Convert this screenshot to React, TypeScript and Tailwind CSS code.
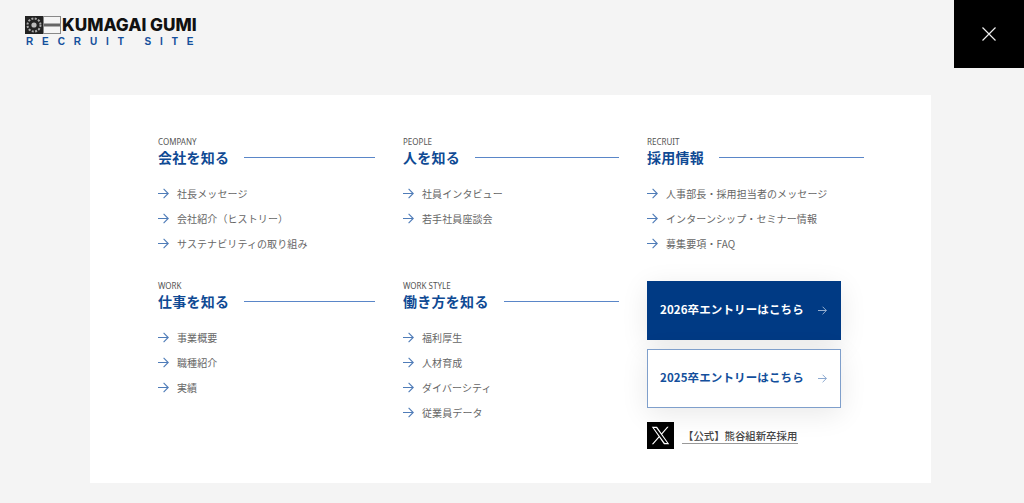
// App.tsx — recruit site menu overlay
const SANS = 'font-["Noto_Sans_CJK_JP","Noto_Sans",sans-serif]';

function Arrow({ className = 'w-[11px] h-[11px]' }: { className?: string }) {
  return (
    <svg viewBox="0 0 11 11" className={className} fill="none" stroke="currentColor" strokeWidth="1.1">
      <path d="M0 5.5H10.2M5.6 .9L10.2 5.5L5.6 10.1" />
    </svg>
  );
}

function Section({ en, title, links }: { en: string; title: string; links: string[] }) {
  return (
    <div>
      <p className="text-[8px] leading-[10px] text-[#555] h-[10px] font-['Noto_Sans',sans-serif]">{en}</p>
      <div className="flex items-center gap-[15px] h-[20px]">
        <h2 className="text-[14px] leading-[20px] font-bold text-[#0f4a94] tracking-[0.02em] whitespace-nowrap">{title}</h2>
        <div className="flex-1 h-px bg-[#5a86c8]" />
      </div>
      <ul className="mt-[14px] flex flex-col">
        {links.map((t) => (
          <li key={t} className="flex items-center h-[25px] text-[#4f7cb8]">
            <Arrow />
            <span className="ml-[8px] text-[10px] text-[#666] tracking-[0.1px] whitespace-nowrap">{t}</span>
          </li>
        ))}
      </ul>
    </div>
  );
}

function Entry({ label, solid }: { label: string; solid?: boolean }) {
  return (
    <a
      className={`flex items-center justify-between h-[59px] pl-[12px] pr-[13px] pb-[1px] border shadow-[0_6px_28px_rgba(0,0,0,0.09)] ${
        solid ? 'bg-[#003a84] border-[#003a84] text-white' : 'bg-white border-[#7f9fcb] text-[#134f9c]'
      }`}
    >
      <span className="text-[11.5px] font-bold tracking-[0.01em] whitespace-nowrap">{label}</span>
      <Arrow className={`w-[9px] h-[9px] ${solid ? 'text-[#a8bcd8]' : 'text-[#7f9fcb]'}`} />
    </a>
  );
}

function Logo() {
  return (
    <div className="w-[172px]">
      <div className="flex items-center h-[18px]">
        <svg viewBox="0 0 36 18" className="w-[36px] h-[18px] shrink-0">
          <rect width="18" height="18" fill="#222" />
          <circle cx="9" cy="9" r="6.5" fill="none" stroke="#aaa" strokeWidth="2" strokeDasharray="2 1.4" />
          <circle cx="9" cy="9" r="2.6" fill="#bbb" />
          <rect x="18.5" y=".5" width="17" height="17" fill="#f4f4f4" stroke="#888" />
          <rect x="19" y="7.5" width="16" height="3" fill="#666" />
        </svg>
        <span className="ml-[1px] font-['Inter',sans-serif] font-extrabold text-[17.2px] leading-[18px] text-[#111] whitespace-nowrap">
          KUMAGAI GUMI
        </span>
      </div>
      <p className="mt-[3px] pl-px font-['Liberation_Sans',sans-serif] font-bold text-[10px] leading-[10px] text-[#134f9c] tracking-[0.89em] whitespace-nowrap">
        RECRUIT SITE
      </p>
    </div>
  );
}

export default function App() {
  return (
    <div className={`h-[503px] w-[1024px] overflow-hidden bg-[#f4f4f4] ${SANS}`}>
      <header className="flex justify-between h-[95px]">
        <div className="pl-[25px] pt-[16px]">
          <Logo />
        </div>
        <button className="w-[70px] h-[68px] bg-black flex items-center justify-center text-[#eee]">
          <svg viewBox="0 0 14 14" className="w-[14px] h-[14px]" fill="none" stroke="currentColor" strokeWidth="1.2">
            <path d="M.5 .5L13.5 13.5M13.5 .5L.5 13.5" />
          </svg>
        </button>
      </header>

      <main className="ml-[90px] w-[841px] h-[388px] bg-white pl-[68px] pr-[67px] pt-[42px] grid grid-cols-[217px_216px_217px] gap-x-[28px] grid-rows-[144px_1fr]">
        <Section en="COMPANY" title="会社を知る" links={['社長メッセージ', '会社紹介（ヒストリー）', 'サステナビリティの取り組み']} />
        <Section en="PEOPLE" title="人を知る" links={['社員インタビュー', '若手社員座談会']} />
        <Section en="RECRUIT" title="採用情報" links={['人事部長・採用担当者のメッセージ', 'インターンシップ・セミナー情報', '募集要項・FAQ']} />
        <Section en="WORK" title="仕事を知る" links={['事業概要', '職種紹介', '実績']} />
        <Section en="WORK STYLE" title="働き方を知る" links={['福利厚生', '人材育成', 'ダイバーシティ', '従業員データ']} />
        <div className="w-[194px] flex flex-col">
          <Entry label="2026卒エントリーはこちら" solid />
          <div className="h-[9px] shrink-0" />
          <Entry label="2025卒エントリーはこちら" />
          <div className="flex items-center mt-[14px]">
            <div className="w-[27px] h-[27px] bg-black flex items-center justify-center text-white">
              <svg viewBox="0 0 24 24" className="w-[19px] h-[19px]" fill="currentColor">
                <path d="M14.1 10.3L22.3 1h-1.9l-7.1 8.1L7.6 1H1l8.6 12.2L1 23h1.9l7.5-8.6L16.4 23H23L14.1 10.3zm-2.7 3l-.9-1.2L3.6 2.4h3l5.6 7.8.9 1.2 7.3 10.2h-3l-6-8.3z" />
              </svg>
            </div>
            <span className="ml-[8px] mt-[1px] px-[1px] text-[10.4px] leading-[15px] font-medium text-[#444] border-b border-[#999] whitespace-nowrap">
              【公式】熊谷組新卒採用
            </span>
          </div>
        </div>
      </main>
    </div>
  );
}
